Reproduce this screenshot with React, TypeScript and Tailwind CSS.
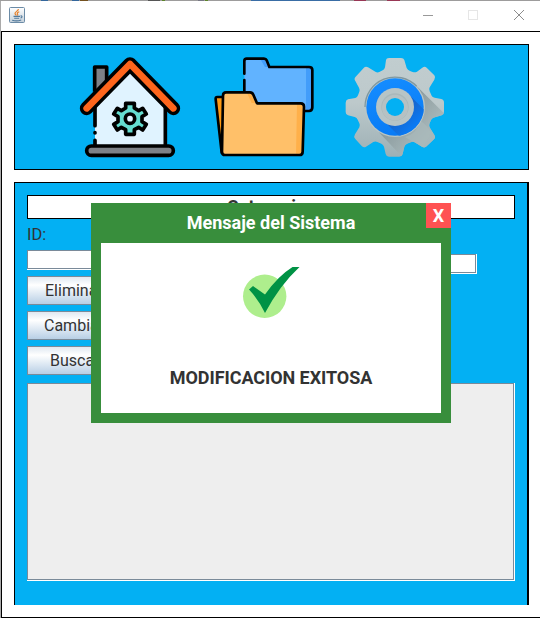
import React from 'react';

function JavaIcon() {
  return (
    <svg width="16" height="16" viewBox="0 0 16 16">
      <defs>
        <linearGradient id="java" x1="0" y1="0" x2="0" y2="1">
          <stop offset="0" stopColor="#ffffff" />
          <stop offset="1" stopColor="#c4d0da" />
        </linearGradient>
      </defs>
      <rect x=".5" y=".5" width="15" height="15" rx="1" fill="url(#java)" stroke="#6b8ba6" />
      <path d="M9.5 2.2C9.2 4 5.6 5 6 6.6c.2.8 1 1.200 1.400 1.900M10.300 4.700C8.600 5.300 7.800 6 8.600 7.200c.3.500.1 1-.2 1.300" fill="none" stroke="#e8822c" strokeWidth="1.200" />
      <path d="M4.500 9.400h6.500M5.200 11.200h5M3.200 13.200c2.500.8 6.500.7 9-.2M11.500 9c2-.5 2 1.500 0 2" fill="none" stroke="#527a9c" strokeWidth="1.100" />
    </svg>
  );
}

function HouseIcon() {
  return (
    <svg width="120" height="120" viewBox="0 0 360 360">
      <path d="M74 140V66h36v48" fill="#7d8187" stroke="#000" strokeWidth="11" strokeLinejoin="round" />
      <path d="M75 302V188L180 82l106 106v114z" fill="#e0f3ff" />
      <path d="M286 180v122M75 188v54M75 263v1M75 286v20" fill="none" stroke="#000" strokeWidth="11" strokeLinecap="round" />
      <path d="M50 190L180 57l130 133" fill="none" stroke="#000" strokeWidth="41" strokeLinecap="round" strokeLinejoin="round" />
      <path d="M50 190L180 57l130 133" fill="none" stroke="#ff651c" strokeWidth="20" strokeLinecap="round" strokeLinejoin="round" />
      <rect x="50" y="303" width="260" height="28" rx="14" fill="#7d8187" stroke="#000" strokeWidth="11" />
      <path
        d="M167 175H193V189L206 197L218 190L229 207L216 215V230L229 238L218 255L206 247L193 254V268H167V254L154 247L142 255L131 238L144 230V215L131 207L142 190L154 197L167 189Z"
        fill="#65ddd0"
        stroke="#000"
        strokeWidth="11"
        strokeLinejoin="round"
      />
      <circle cx="180" cy="221" r="14" fill="#e0f3ff" stroke="#000" strokeWidth="11" />
    </svg>
  );
}

function FoldersIcon() {
  return (
    <svg width="120" height="120" viewBox="0 0 360 360">
      <path d="M118 160V49q0-7 7-7h52q6 0 8 5l8 20h118q9 0 9 9v112q0 9-9 9h-50l-143-37z" fill="#61b3ff" />
      <path d="M303 69h13q6 0 6 9v110q0 9-6 9h-13z" fill="#429dfa" />
      <path d="M167 44h13l11 22h-11z" fill="#429dfa" />
      <path d="M118 86V48q0-7 7-7h52q6 0 8 5l8 20h119q10 0 10 9v112q0 11-10 11h-14M118 105v34" fill="none" stroke="#000" strokeWidth="8" strokeLinecap="round" />
      <path d="M60 156H37q-6 0-5 7l18 160z" fill="#ff9a13" stroke="#000" strokeWidth="8" strokeLinejoin="round" />
      <path d="M54 152q0-10 9-10h72q7 0 10 7l11 26h131q10 0 10 10l-4 135q0 10-10 10H60q-9 0-9-10z" fill="#ffc069" />
      <path d="M276 176h14q7 0 6 9l-5 132q0 9-9 9h-9zM126 144h12l14 30h-12z" fill="#ffb04a" />
      <path d="M54 152q0-10 9-10h72q7 0 10 7l11 26h131q10 0 10 10l-4 135q0 10-10 10H60q-9 0-9-10z" fill="none" stroke="#000" strokeWidth="8" strokeLinejoin="round" />
    </svg>
  );
}

const GEAR =
  'M153 45Q154 39 162 39h36q8 0 10 6l7 24q3 6 10 9l8 3q7 2 13-1l16-12q7-5 13 0l23 23q5 6 0 13l-14 23q-3 6 0 12l6 13q2 4 9 6l20 4q8 2 8 11v28q0 8-7 10l-25 7q-5 2-7 7l-5 12q-2 6 2 12l13 21q5 7-1 13l-22 21q-6 6-14 1l-22-13q-6-3-12 0l-11 4q-6 3-8 9l-5 22q-2 8-10 8h-31q-8 0-10-8l-5-22q-2-6-8-9l-12-5q-6-3-12 0l-22 14q-6 4-13-2l-19-21q-6-7-1-14l13-21q3-6 0-12l-5-11q-2-6-9-8l-20-5q-7-2-7-10v-27q0-9 7-11l22-4q6-2 8-8l4-11q2-6-1-12L61 108q-5-7 1-13l24-26q6-7 13-2l22 13q6 4 12 1l10-5q5-2 7-9z';

function GearIcon() {
  return (
    <svg width="120" height="120" viewBox="0 0 360 360">
      <defs>
        <linearGradient id="steel" x1="0" y1="0" x2="0" y2="1">
          <stop offset="0" stopColor="#c1cdcf" />
          <stop offset=".45" stopColor="#bdc9cb" />
          <stop offset="1" stopColor="#9db0b5" />
        </linearGradient>
        <linearGradient id="shade" gradientUnits="userSpaceOnUse" x1="200" y1="190" x2="280" y2="270">
          <stop offset="0" stopColor="#7f8f92" />
          <stop offset="1" stopColor="#a9b8ba" />
        </linearGradient>
        <linearGradient id="ring" gradientUnits="userSpaceOnUse" x1="160" y1="100" x2="210" y2="270">
          <stop offset="0" stopColor="#148cff" />
          <stop offset="1" stopColor="#087af5" />
        </linearGradient>
        <linearGradient id="ringshade" gradientUnits="userSpaceOnUse" x1="190" y1="196" x2="242" y2="248">
          <stop offset="0" stopColor="#1a60c4" />
          <stop offset="1" stopColor="#087cf8" />
        </linearGradient>
        <clipPath id="gearclip"><path d={GEAR} /></clipPath>
        <clipPath id="ringclip"><circle cx="180" cy="186" r="87" /></clipPath>
        <mask id="hole"><rect width="360" height="360" fill="#fff" /><circle cx="180" cy="186" r="27" fill="#000" /></mask>
      </defs>
      <g mask="url(#hole)">
        <path d={GEAR} fill="url(#steel)" />
        <path d="M244 122L340 218V350H215L119 248z" fill="url(#shade)" opacity=".8" clipPath="url(#gearclip)" />
        <path d="M257 228q17 10 31 35l-24 45-54-32q34-9 47-48z" fill="#a9b9bb" opacity=".7" clipPath="url(#gearclip)" />
        <circle cx="180" cy="186" r="90" fill="#b9c5c5" />
        <path d="M90 186a90 90 0 0 1 155-62" fill="none" stroke="#7f98a0" strokeWidth="4" />
        <circle cx="180" cy="186" r="86" fill="url(#ring)" />
        <path d="M219 146l65 64v80h-75l-67-67z" fill="url(#ringshade)" clipPath="url(#ringclip)" />
        <circle cx="180" cy="186" r="57" fill="#b7c4c6" />
        <circle cx="180" cy="186" r="41" fill="#a9b8ba" />
        <circle cx="180" cy="188" r="39" fill="#b5c1c3" />
      </g>
    </svg>
  );
}

function CheckIcon() {
  return (
    <svg width="60" height="56" viewBox="0 0 60 56">
      <circle cx="23.700" cy="33.300" r="21.700" fill="#aeee8d" />
      <path d="M8 26.500L12 23l12 8.500Q37 13 51.500 4H58.500Q39 22 24 50Q17 36 8 26.500z" fill="#009245" />
    </svg>
  );
}

function Field({ className }: { className: string }) {
  return (
    <div className={`border-b border-r border-white ${className}`}>
      <div className="h-full w-full border border-[#7a8a99]" />
    </div>
  );
}

function SwingButton({ children, indent }: { children: string; indent: string }) {
  return (
    <button className={`block h-[29px] w-[110px] border border-[#7a8a99] bg-linear-to-b from-[#dfe8f1] via-white via-30% to-[#b8cfe5] text-left text-[16px] leading-[27px] text-[#333] ${indent}`}>
      {children}
    </button>
  );
}

function Dialog() {
  return (
    <div className="absolute left-[91px] top-[203px] flex h-[220px] w-[360px] flex-col bg-[#388e3c] px-[10px] pb-[10px]">
      <div className="h-[40px] shrink-0 text-center text-[18px] leading-[39px] font-bold text-white">Mensaje del Sistema</div>
      <div className="flex flex-1 flex-col items-center bg-white pt-[20px]">
        <CheckIcon />
        <div className="mt-[45px] text-[18px] leading-[27px] font-bold tracking-[-0.06px] whitespace-nowrap text-[#333]">MODIFICACION EXITOSA</div>
      </div>
      <button className="absolute right-0 top-0 h-[25px] w-[25px] bg-[#ff5252] text-[18px] leading-[24px] font-bold text-white">X</button>
    </div>
  );
}

export default function App() {
  return (
    <div className="h-[618px] w-[548px] overflow-hidden bg-white font-[Roboto,sans-serif]">
      <div className="relative flex h-full w-[540px] flex-col">
        <div className="flex h-px w-full shrink-0 bg-[#9d9c9c]">
          <div className="ml-[41px] h-px w-[7px] bg-[#34679c]" />
          <div className="ml-[24px] h-px w-[7px] bg-[#34679c]" />
          <div className="ml-px h-px w-[8px] bg-[#73511f]" />
          <div className="ml-[60px] h-px w-[12px] bg-[#555]" />
          <div className="ml-[2px] h-px w-[3px] bg-[#5d8429]" />
          <div className="ml-[33px] h-px w-[6px] bg-[#777784]" />
          <div className="ml-px h-px w-[3px] bg-[#5d8429]" />
          <div className="ml-[43px] h-px w-[89px] bg-[#396da5]" />
          <div className="ml-[14px] h-px w-[12px] bg-[#983755]" />
          <div className="ml-[21px] h-px w-[13px] bg-[#983755]" />
        </div>
        <div className="flex min-h-0 flex-1">
          <div className="w-px shrink-0 bg-[#aaa]" />
          <div className="flex flex-1 flex-col">
            <header className="flex h-[30px] shrink-0 justify-between pl-[8px] pr-[15px] pt-[6px]">
              <JavaIcon />
              <svg width="102" height="16" viewBox="0 0 102 16" fill="none" shapeRendering="crispEdges">
                <path d="M0 8.500h10" stroke="#999" />
                <path d="M45.500 3.500h9v9h-9z" stroke="#e6e6e6" />
                <path d="M91 3l10 10M101 3L91 13" stroke="#8c8c8c" shapeRendering="auto" />
              </svg>
            </header>
            <main className="flex min-h-0 flex-1 flex-col border-y border-l border-black pl-[12px] pt-[12px]">
              <nav className="flex h-[126px] w-[515px] shrink-0 border border-black bg-[#03b0f3] pl-[55px]">
                <HouseIcon />
                <div className="ml-[15px]"><FoldersIcon /></div>
                <div className="ml-[10px]"><GearIcon /></div>
              </nav>
              <section className="mt-[12px] h-[423px] w-[515px] border-l border-r-2 border-t border-black bg-[#03b0f3] pl-[12px] pt-[12px]">
                <h1 className="h-[24px] w-[488px] border border-black bg-white text-center text-[18px] leading-[22px] font-bold text-[#333]">Categorias</h1>
                <div className="flex h-[57px] justify-between pr-[50px]">
                  <div>
                    <div className="h-[31px] text-[16.500px] leading-[31px] text-[#333]">ID:</div>
                    <Field className="h-[20px] w-[200px] bg-white" />
                  </div>
                  <Field className="mt-[35px] h-[20px] w-[200px] bg-white" />
                </div>
                <div className="flex flex-col gap-[6px]">
                  <SwingButton indent="pl-[17px]">Eliminar</SwingButton>
                  <SwingButton indent="pl-[16px]">Cambiar</SwingButton>
                  <SwingButton indent="pl-[22px]">Buscar</SwingButton>
                </div>
                <Field className="mt-[8px] h-[198px] w-[488px] bg-[#eee]" />
              </section>
            </main>
          </div>
        </div>
        <Dialog />
      </div>
    </div>
  );
}
